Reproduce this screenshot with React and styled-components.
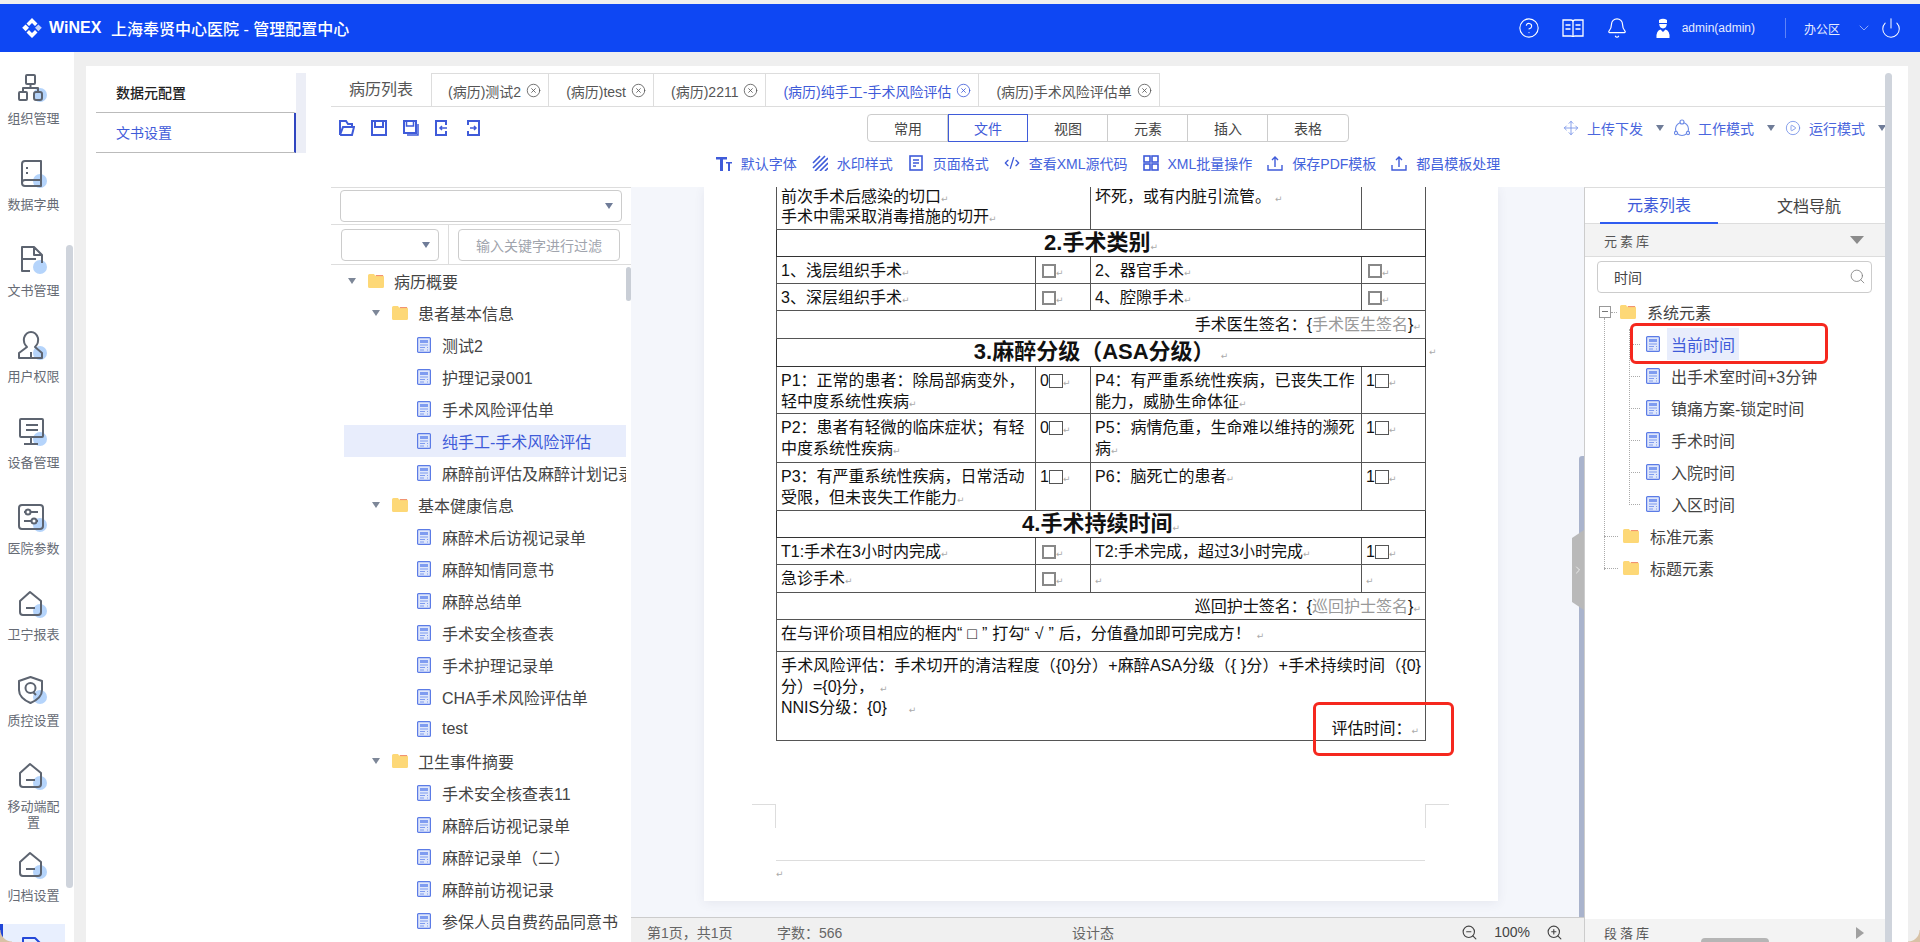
import React from 'react';
import styled, { createGlobalStyle } from 'styled-components';
import { Bell, ChevronDown, ChevronRight, CircleHelp, CirclePlay, CircleX, CodeXml, Move, Power, Search, ZoomIn, ZoomOut } from 'lucide-react';

const GlobalStyle = createGlobalStyle`
  html, body { margin: 0; padding: 0; height: 100%; overflow: hidden; }
  body { font-family: "Liberation Sans", "Noto Sans CJK SC", sans-serif; color: #333; }
  * { box-sizing: border-box; }
`;

const BLUE = '#3f5bd9';

const Shell = styled.div`
  position: relative;
  width: 1920px;
  height: 942px;
  padding-top: 4px;
  background: #efefef;
  overflow: hidden;
  display: flex;
  flex-direction: column;
`;

const Corner = styled.div`
  position: absolute;
  bottom: 0;
  width: 12px;
  height: 12px;
  ${(p) => (p.$right ? 'right: 0;' : 'left: 0;')}
  background: radial-gradient(circle at ${(p) => (p.$right ? '0 0' : '100% 0')}, transparent 11px, #d8c2a6 12px);
`;

/* header */
const Header = styled.header`
  height: 48px;
  flex: none;
  background: #0e47f3;
  color: #fff;
  display: flex;
  align-items: center;
  padding: 0 18px 0 22px;
`;

const Brand = styled.div`
  font-size: 16px;
  font-weight: 700;
  margin-left: 7px;
  width: 62px;
`;

const HeaderTitle = styled.div`
  font-size: 16px;
  font-weight: 500;
`;

const HeaderRight = styled.div`
  margin-left: auto;
  display: flex;
  align-items: center;
`;

const HeaderText = styled.span`
  font-size: 12px;
  margin-left: ${(p) => p.$left || 0}px;
  color: #e6ecff;
`;

const HeaderDivider = styled.span`
  width: 1px;
  height: 20px;
  background: #5f83f7;
  margin: 0 18px 0 30px;
`;

const Body = styled.div`
  flex: 1;
  min-height: 0;
  display: flex;
`;

/* left nav */
const Sidebar = styled.nav`
  position: relative;
  width: 74px;
  flex: none;
  background: #fff;
  padding-top: 9px;
  overflow: hidden;
`;

const SideThumb = styled.div`
  position: absolute;
  left: 66px;
  top: 193px;
  width: 7px;
  height: 643px;
  border-radius: 4px;
  background: #cfd4dc;
`;

const SideItem = styled.div`
  position: relative;
  width: 65px;
  min-height: 86px;
  padding: 12px 3px 7px;
  display: flex;
  flex-direction: column;
  align-items: center;
  background: ${(p) => (p.$active ? '#e8effe' : 'transparent')};
  ${(p) => p.$active && 'border-left: 3px solid #1f45d8;'}
`;

const SideLabel = styled.div`
  margin-top: 8px;
  width: 54px;
  font-size: 13px;
  line-height: 16px;
  text-align: center;
  color: #666b75;
  transform: translateX(1px);
`;

const Main = styled.main`
  flex: 1;
  min-width: 0;
  margin: 14px 12px 0;
  padding: 7px 16px 0 0;
  background: #fff;
  display: flex;
`;

const MenuColumn = styled.div`
  width: 245px;
  flex: none;
  padding-left: 10px;
`;

const MenuList = styled.div`
  width: 210px;
  height: 80px;
  border-right: 10px solid #eceef6;
`;

const MenuItem = styled.div`
  height: 40px;
  padding: 0 0 2px 20px;
  display: flex;
  align-items: center;
  font-size: 14px;
  font-weight: ${(p) => (p.$active ? 400 : 500)};
  color: ${(p) => (p.$active ? BLUE : '#222')};
  border-bottom: 1px solid #bbb;
  border-right: 2px solid ${(p) => (p.$active ? '#3046c0' : 'transparent')};
`;

const Workspace = styled.div`
  width: 1554px;
  flex: none;
  display: flex;
  flex-direction: column;
`;

const PageScroll = styled.div`
  width: 7px;
  flex: none;
  border-radius: 4px 4px 0 0;
  background: #cfd4dc;
`;

/* tabs */
const TabBar = styled.div`
  height: 34px;
  flex: none;
  display: flex;
  border-bottom: 1px solid #ddd;
`;

const ListTab = styled.div`
  width: 100px;
  padding: 0 0 4px 18px;
  display: flex;
  align-items: center;
  font-size: 16px;
  color: #555;
`;

const DocTab = styled.div`
  display: flex;
  align-items: center;
  gap: 5px;
  padding: 1px 7px 0 ${(p) => (p.$first ? 16 : 17)}px;
  font-size: 14px;
  color: ${(p) => (p.$active ? BLUE : '#555')};
  border: 1px solid #ddd;
  border-bottom: 0;
  border-left-width: ${(p) => (p.$first ? 1 : 0)}px;
`;

/* toolbar */
const Toolbar = styled.div`
  height: 80px;
  flex: none;
`;

const ToolRow = styled.div`
  display: grid;
  grid-template-columns: 1fr auto 1fr;
  align-items: center;
  padding-top: 7px;
  height: 35px;
  overflow: hidden;
`;

const FileIcons = styled.div`
  display: flex;
  gap: 16px;
  padding-left: 8px;
`;

const Segments = styled.div`
  display: flex;
  height: 28px;
  border: 1px solid #ccc;
  border-radius: 4px;
`;

const Segment = styled.div`
  width: 80px;
  margin: -1px 0;
  display: flex;
  align-items: center;
  justify-content: center;
  font-size: 14px;
  color: ${(p) => (p.$active ? BLUE : '#444')};
  border: 1px solid ${(p) => (p.$active ? BLUE : 'transparent')};
  border-right-color: ${(p) => (p.$active ? BLUE : p.$last ? 'transparent' : '#ccc')};
`;

const ModeActions = styled.div`
  justify-self: end;
  margin-right: -1px;
  display: flex;
  align-items: center;
`;

const ModeText = styled.span`
  margin-left: 8px;
  font-size: 14px;
  color: #4a66dd;
`;

const Caret = styled.span`
  width: 0;
  height: 0;
  margin: 0 ${(p) => p.$right ?? 10}px 0 ${(p) => p.$left ?? 13}px;
  border-left: 4px solid transparent;
  border-right: 4px solid transparent;
  border-top: 6px solid #6f7c98;
`;

const ActionRow = styled.div`
  margin-top: 8px;
  height: 26px;
  display: flex;
  justify-content: center;
  align-items: center;
  gap: 15px;
`;

const Action = styled.div`
  display: flex;
  align-items: center;
  gap: 9px;
  font-size: 14px;
  color: #4462dc;
`;

/* columns below the toolbar */
const Columns = styled.div`
  flex: 1;
  min-height: 0;
  display: flex;
`;

const TreeColumn = styled.div`
  position: relative;
  width: 300px;
  flex: none;
  border-top: 1px solid #ddd;
  display: flex;
  flex-direction: column;
`;

const FilterRow = styled.div`
  flex: none;
  display: flex;
  align-items: center;
  height: ${(p) => p.$h}px;
  padding: ${(p) => p.$pad};
  border-bottom: 1px solid #ddd;
`;

const SelectBox = styled.div`
  width: ${(p) => p.$w}px;
  height: 32px;
  padding-right: 8px;
  display: flex;
  align-items: center;
  justify-content: flex-end;
  border: 1px solid #ccc;
  border-radius: 4px;
`;

const FilterDivider = styled.span`
  align-self: stretch;
  width: 1px;
  margin: 0 9px;
  background: #ddd;
`;

const FilterInput = styled.div`
  width: 162px;
  height: 32px;
  display: flex;
  align-items: center;
  justify-content: center;
  font-size: 14px;
  color: #a0a4ad;
  border: 1px solid #ccc;
  border-radius: 4px;
`;

const Tree = styled.div`
  flex: 1;
  min-height: 0;
  overflow: hidden;
  padding: 0 0 0 13px;
`;

const TreeThumb = styled.div`
  position: absolute;
  right: 0;
  top: 79px;
  width: 5px;
  height: 34px;
  border-radius: 3px;
  background: #c9ced6;
`;

const TreeRow = styled.div`
  width: 282px;
  height: 32px;
  padding-left: ${(p) => p.$indent}px;
  display: flex;
  align-items: center;
  white-space: nowrap;
  overflow: hidden;
  font-size: 16px;
  color: ${(p) => (p.$active ? BLUE : '#444')};
  background: ${(p) => (p.$active ? '#e8edfc' : 'transparent')};
`;

const TreeCaret = styled.span`
  flex: none;
  width: 0;
  height: 0;
  margin-right: 12px;
  border-left: 4px solid transparent;
  border-right: 4px solid transparent;
  border-top: 6px solid #7d8798;
`;

const TreeGap = styled.span`
  flex: none;
  width: ${(p) => p.$w}px;
`;

/* document */
const DocColumn = styled.div`
  width: 953px;
  flex: none;
  display: flex;
  flex-direction: column;
`;

const Canvas = styled.div`
  position: relative;
  flex: 1;
  min-height: 0;
  padding-left: 73px;
  overflow: hidden;
  background: #f4f6fb;
`;

const CanvasThumb = styled.div`
  position: absolute;
  right: 0;
  top: 269px;
  bottom: 0;
  width: 5px;
  border-radius: 3px 0 0 0;
  background: #a9b3cc;
`;

const Collapse = styled.div`
  position: absolute;
  right: 0;
  top: 343px;
  width: 12px;
  height: 80px;
  display: flex;
  align-items: center;
  justify-content: center;
  color: #fff;
  background: #b9b9b9;
  clip-path: polygon(0 10%, 100% 0, 100% 100%, 0 90%);
`;

const Sheet = styled.div`
  position: relative;
  width: 794px;
  height: 714px;
  padding: 0 73px 0 72px;
  background: #fff;
  box-shadow: 0 2px 10px rgba(60, 70, 100, 0.08);
`;

const Table = styled.table`
  width: 649px;
  table-layout: fixed;
  border-collapse: collapse;
  font-size: 16px;
  line-height: 21px;
  color: #111;
`;

const Tr = styled.tr`
  height: ${(p) => p.$h}px;
`;

const Td = styled.td`
  vertical-align: top;
  padding: ${(p) => (p.$clip ? '0' : '3px')} 4px 0 ${(p) => p.$left || 4}px;
  text-align: ${(p) => p.$align || 'left'};
  border: 1px solid #555;
  ${(p) => p.$clip && 'border-top: 0; line-height: 20px;'}
`;

const TitleCell = styled.td`
  padding: 0;
  text-align: center;
  vertical-align: middle;
  font-size: 22px;
  font-weight: 700;
  line-height: 26px;
  border: 1px solid #333;
`;

const Mark = styled.span`
  font-family: "DejaVu Sans", sans-serif;
  font-size: 9px;
  font-weight: 400;
  line-height: 0;
  color: #aaa;
  margin-left: ${(p) => p.$gap || 0}px;
`;

const Box = styled.span`
  display: inline-block;
  width: 14px;
  height: 14px;
  margin-top: -2px;
  vertical-align: -2px;
  border: ${(p) => (p.$thin ? '1px solid #555' : '2px solid #888')};
`;

const Placeholder = styled.span`
  color: #999;
`;

const WideGlyph = styled.span`
  letter-spacing: 5px;
`;

const LastCell = styled.td`
  padding: 3px 4px 0;
  text-align: justify;
  vertical-align: top;
  border: 1px solid #555;
`;

const RightLine = styled.div`
  text-align: right;
  padding-right: 2px;
`;

const StrayMark = styled.span`
  position: absolute;
  left: 725px;
  top: 160px;
  font-size: 9px;
  color: #aaa;
  font-family: "DejaVu Sans", sans-serif;
`;

const CropMark = styled.span`
  position: absolute;
  top: 617px;
  width: 24px;
  height: 24px;
  ${(p) =>
    p.$right
      ? 'left: 721px; border-top: 1px solid #ddd; border-left: 1px solid #ddd;'
      : 'left: 48px; border-top: 1px solid #ddd; border-right: 1px solid #ddd;'}
`;

const SheetFooter = styled.div`
  position: absolute;
  left: 72px;
  top: 673px;
  width: 649px;
  padding-top: 7px;
  border-top: 1px solid #ddd;
  font-size: 9px;
  line-height: 12px;
  color: #aaa;
  font-family: "DejaVu Sans", sans-serif;
`;

const RedBox = styled.div`
  position: absolute;
  left: ${(p) => p.$x}px;
  top: ${(p) => p.$y}px;
  width: ${(p) => p.$w}px;
  height: ${(p) => p.$h}px;
  border: 3px solid #f5281e;
  border-radius: 6px;
`;

const StatusBar = styled.div`
  height: 25px;
  flex: none;
  padding: 4px 21px 0 16px;
  display: grid;
  grid-template-columns: 130px 295px 1fr auto;
  align-items: center;
  font-size: 14px;
  color: #666;
  background: #f0f0f0;
  border-top: 1px solid #ccc;
`;

const ZoomGroup = styled.div`
  display: flex;
  align-items: center;
  gap: 16px;
  color: #444;
`;

/* right panel */
const RightPanel = styled.aside`
  position: relative;
  flex: 1;
  min-width: 0;
  border-left: 1px solid #ccc;
  border-top: 1px solid #ddd;
  display: flex;
  flex-direction: column;
`;

const PanelTabs = styled.div`
  flex: none;
  height: 36px;
  display: flex;
  padding-left: 15px;
  border-bottom: 1px solid #ddd;
`;

const PanelTab = styled.div`
  width: ${(p) => p.$w}px;
  height: 36px;
  margin-left: ${(p) => p.$left || 0}px;
  padding-bottom: 2px;
  display: flex;
  align-items: center;
  justify-content: center;
  font-size: 16px;
  color: ${(p) => (p.$active ? BLUE : '#444')};
  ${(p) => p.$active && 'border-bottom: 2px solid #2f5cf0;'}
`;

const LibraryBar = styled.div`
  flex: none;
  height: ${(p) => p.$h}px;
  padding: ${(p) => p.$top || 0}px 21px 0 19px;
  display: flex;
  align-items: center;
  justify-content: space-between;
  font-size: 13px;
  letter-spacing: 3px;
  color: #555;
  background: #f3f3f3;
  border-bottom: ${(p) => (p.$line ? '1px solid #ddd' : '0')};
`;

const LibCaret = styled.span`
  width: 0;
  height: 0;
  ${(p) =>
    p.$side
      ? 'border-top: 6px solid transparent; border-bottom: 6px solid transparent; border-left: 8px solid #a0a0a0;'
      : 'border-left: 7px solid transparent; border-right: 7px solid transparent; border-top: 8px solid #8b8b8b;'}
`;

const SearchBox = styled.div`
  flex: none;
  height: 32px;
  margin: 4px 13px 0 12px;
  padding: 0 5px 1px 16px;
  display: flex;
  align-items: center;
  justify-content: space-between;
  font-size: 14px;
  color: #444;
  border: 1px solid #ccc;
  border-radius: 4px;
`;

const ElementTree = styled.div`
  position: relative;
  flex: 1;
  min-height: 0;
  padding-top: 3px;
`;

const Guide = styled.span`
  position: absolute;
  left: ${(p) => p.$x}px;
  top: ${(p) => p.$top}px;
  height: ${(p) => p.$h}px;
  border-left: 1px dotted #aaa;
`;

const ElementRow = styled.div`
  height: 32px;
  padding-left: ${(p) => p.$indent}px;
  display: flex;
  align-items: center;
  font-size: 16px;
  color: #444;
`;

const Stub = styled.span`
  flex: none;
  width: ${(p) => p.$w}px;
  margin-right: ${(p) => p.$gap}px;
  border-top: 1px dotted #aaa;
`;

const MinusBox = styled.span`
  flex: none;
  position: relative;
  width: 12px;
  height: 12px;
  border: 1px solid #999;
  &::after {
    content: '';
    position: absolute;
    left: 2px;
    right: 2px;
    top: 4px;
    border-top: 1px solid #777;
  }
`;

const ElementLabel = styled.span`
  height: 32px;
  margin-left: ${(p) => p.$left}px;
  padding: 0 4px;
  display: flex;
  align-items: center;
  color: ${(p) => (p.$active ? BLUE : '#444')};
  background: ${(p) => (p.$active ? '#e8edfc' : 'transparent')};
`;

const HScroll = styled.div`
  position: absolute;
  left: 116px;
  bottom: 0;
  width: 68px;
  height: 4px;
  border-radius: 4px 4px 0 0;
  background: #b5b5b5;
`;

/* drawings */
const LogoMark = () => (
  <svg width="20" height="20" viewBox="0 0 20 20" fill="#fff">
    <path d="M10 0 L15.5 5.5 L13 8 L10 5 L7 8 L4.5 5.5 Z" />
    <path d="M10 20 L15.5 14.5 L13 12 L10 15 L7 12 L4.5 14.5 Z" />
    <path d="M3.6 6.4 L7 9.8 L3.6 13.2 L0.2 9.8 Z" />
    <path d="M16.4 6.4 L19.8 9.8 L16.4 13.2 L13 9.8 Z" opacity="0.75" />
  </svg>
);

const ManualIcon = () => (
  <svg width="22" height="20" viewBox="0 0 22 20" fill="none" stroke="#fff" strokeWidth="1.3" style={{ marginLeft: 22 }}>
    <path d="M1 2 H9 Q11 2 11 4 Q11 2 13 2 H21 V18 H13 Q11 18 11 19 Q11 18 9 18 H1 Z" />
    <path d="M11 4 V18 M3.5 7 H8.5 M3.5 11 H8.5 M13.5 7 H18.5 M13.5 11 H18.5" />
  </svg>
);

const UserIcon = () => (
  <svg width="14" height="20" viewBox="0 0 14 20" fill="#fff" style={{ marginLeft: 28 }}>
    <path d="M3 2 Q7 -0.5 11 2 L11 5 L3 5 Z" />
    <path d="M3.2 6 H10.8 Q10.6 10 7 10.6 Q3.4 10 3.2 6 Z" />
    <path d="M0.5 20 Q0 12.5 4.5 11.5 L7 14 L9.5 11.5 Q14 12.5 13.5 20 Z" />
  </svg>
);

const ToolSvg = ({ children, w = 16, h = 16 }) => (
  <svg width={w} height={h} viewBox={`0 0 ${w} ${h}`} fill="none" stroke={BLUE} strokeWidth="2">
    {children}
  </svg>
);

const fileIcons = [
  <path key="a" d="M1 15 V1 H7 L9 4 H13 V7 M1 15 H13 L15 7 H4 L1 15" />,
  <g key="b"><rect x="1" y="1" width="14" height="14" /><path d="M4 1 V7 H12 V1" /></g>,
  <g key="c"><rect x="1" y="1" width="12" height="12" /><path d="M3.5 1 V6 H10.5 V1 M15 4 V15 H4" strokeWidth="1.5" /></g>,
  <g key="d"><path d="M11 5 V1 H1 V15 H11 V11" /><path d="M12 8 H5 M7 6 L5 8 L7 10" strokeWidth="1.5" /></g>,
  <g key="e"><path d="M1 5 V1 H12 V15 H1 V11" /><path d="M3 8 H9 M7 6 L9 8 L7 10" strokeWidth="1.5" /></g>,
];

const SideDrawing = ({ children, color = '#5d6470' }) => (
  <svg width="34" height="30" viewBox="0 0 34 30" fill="none" stroke={color} strokeWidth="2" strokeLinejoin="round">
    <circle cx="24" cy="22" r="7" fill="#b5d4fb" stroke="none" />
    {children}
  </svg>
);

const houseMinus = (
  <g>
    <path d="M4 12 L14 3 L25 12 V23 Q25 26 22 26 H7 Q4 26 4 23 Z" />
    <path d="M10 19 H19" />
  </g>
);

const sideItems = [
  ['组织管理', <g key="1"><rect x="10" y="2" width="9" height="9" rx="1" /><path d="M14.5 11 V15 M7 19 V15 H22 V19" /><rect x="3" y="19" width="8" height="8" rx="1" /><rect x="18" y="19" width="8" height="8" rx="2" /></g>],
  ['数据字典', <g key="2"><path d="M6 24 V5 Q6 2 9 2 H25 V27 H9 Q6 27 6 24 Q6 21 9 21 H25" /><path d="M11 8 V16" strokeDasharray="2 3" /></g>],
  ['文书管理', <g key="3"><path d="M14 26 H6 V2 H18 L26 10 V18 M18 2 V10 H26" /><path d="M6 14 H20 M6 26 V20" /></g>],
  ['用户权限', <g key="4"><path d="M11 16 Q7 12 8 7 Q10 1 15 1 Q20 1 22 7 Q23 12 19 16 L26 22 V27 H3 V22 Z" /><path d="M15 21 V26" /></g>],
  ['设备管理', <g key="5"><rect x="4" y="2" width="23" height="18" rx="1" /><path d="M10 8 H22 M10 13 H22 M15 20 V26 M8 27 H22" /></g>],
  ['医院参数', <g key="6"><rect x="3" y="2" width="24" height="24" rx="3" /><path d="M8 9 H22 M8 18 H22" /><circle cx="12" cy="9" r="2.5" fill="#fff" /><circle cx="18" cy="18" r="2.5" fill="#fff" /></g>],
  ['卫宁报表', houseMinus],
  ['质控设置', <g key="8"><path d="M14.5 2 L26 6 V15 Q26 23 14.5 28 Q3 23 3 15 V6 Z" /><circle cx="14.5" cy="13" r="5" /><path d="M17 17 L20 20" /></g>],
  ['移动端配置', houseMinus],
  ['归档设置', houseMinus],
];

const DocIcon = () => (
  <svg width="14" height="16" viewBox="0 0 14 16" style={{ flex: 'none' }}>
    <rect x="0.6" y="0.6" width="12.8" height="14.8" rx="1" fill="#dfe7fb" stroke="#5b7be6" strokeWidth="1.2" />
    <rect x="3" y="3" width="8" height="3" fill="#7f9cf0" />
    <path d="M3 8 H11 M3 10.5 H8 M3 13 H7 M10 10.5 H11 M10 13 H11" stroke="#7f9cf0" strokeWidth="1.2" />
  </svg>
);

const FolderIcon = ({ left = 0, right = 10 }) => (
  <svg width="16" height="14" viewBox="0 0 16 14" style={{ flex: 'none', marginLeft: left, marginRight: right }}>
    <path d="M0 1.5 Q0 0 1.5 0 H6 L7 1.5 H15 Q16 1.5 16 3 V12.5 Q16 14 14.5 14 H1.5 Q0 14 0 12.5 Z" fill="#fdd877" />
    <path d="M8 1.6 H15" stroke="#f08a6a" strokeWidth="1" />
  </svg>
);

const treeData = [
  [1, '病历概要'],
  [2, '患者基本信息'],
  [3, '测试2'],
  [3, '护理记录001'],
  [3, '手术风险评估单'],
  [3, '纯手工-手术风险评估', true],
  [3, '麻醉前评估及麻醉计划记录单'],
  [2, '基本健康信息'],
  [3, '麻醉术后访视记录单'],
  [3, '麻醉知情同意书'],
  [3, '麻醉总结单'],
  [3, '手术安全核查表'],
  [3, '手术护理记录单'],
  [3, 'CHA手术风险评估单'],
  [3, 'test'],
  [2, '卫生事件摘要'],
  [3, '手术安全核查表11'],
  [3, '麻醉后访视记录单'],
  [3, '麻醉记录单（二）'],
  [3, '麻醉前访视记录'],
  [3, '参保人员自费药品同意书'],
];

const tabs = [
  ['(病历)测试2'],
  ['(病历)test'],
  ['(病历)2211'],
  ['(病历)纯手工-手术风险评估', true],
  ['(病历)手术风险评估单'],
];

const actions = [
  ['默认字体', <g key="a" fill={BLUE} stroke="none"><path d="M0 2 H11 V4.5 H7 V16 H4 V4.5 H0 Z" /><path d="M10 7 H16 V8.5 H14 V16 H12 V8.5 H10 Z" /></g>],
  ['水印样式', <path key="b" d="M1 8 L8 1 M1 13 L13 1 M3 16 L16 3 M8 16 L16 8 M13 16 L16 13" strokeWidth="1.6" />],
  ['页面格式', <g key="c"><rect x="2" y="1" width="12" height="14" strokeWidth="1.6" /><path d="M5 5 H11 M5 8 H11 M5 11 H8" strokeWidth="1.4" /></g>],
  ['查看XML源代码', null],
  ['XML批量操作', <g key="e" strokeWidth="1.6"><rect x="1" y="1" width="6" height="6" /><rect x="9" y="1" width="6" height="6" /><rect x="1" y="9" width="6" height="6" /><rect x="9" y="9" width="6" height="6" /></g>],
  ['保存PDF模板', <path key="f" d="M1 10 V15 H15 V10 M8 12 V2 M5 5 L8 2 L11 5" strokeWidth="1.4" />],
  ['都昌模板处理', <path key="g" d="M1 10 V15 H15 V10 M8 12 V2 M5 5 L8 2 L11 5" strokeWidth="1.4" />],
];

const elements = ['当前时间', '出手术室时间+3分钟', '镇痛方案-锁定时间', '手术时间', '入院时间', '入区时间'];

const P = ({ gap }) => <Mark $gap={gap}>↵</Mark>;

const DocumentTable = () => (
  <Table>
    <colgroup>
      <col width="259" />
      <col width="55" />
      <col width="271" />
      <col width="64" />
    </colgroup>
    <tbody>
      <Tr $h={42}>
        <Td colSpan={2} $clip>前次手术后感染的切口<P /><br />手术中需采取消毒措施的切开<P /></Td>
        <Td $clip>坏死，或有内脏引流管。<P gap={4} /></Td>
        <Td $clip />
      </Tr>
      <Tr $h={27}><TitleCell colSpan={4}>2.手术类别<P /></TitleCell></Tr>
      <Tr $h={27}>
        <Td>1、浅层组织手术<P /></Td><Td $left={6}><Box /><P /></Td>
        <Td>2、器官手术<P /></Td><Td $left={6}><Box /><P /></Td>
      </Tr>
      <Tr $h={27}>
        <Td>3、深层组织手术<P /></Td><Td $left={6}><Box /><P /></Td>
        <Td>4、腔隙手术<P /></Td><Td $left={6}><Box /><P /></Td>
      </Tr>
      <Tr $h={28}><Td colSpan={4} $align="right">手术医生签名：{'{'}<Placeholder>手术医生签名</Placeholder>{'}'}<P /></Td></Tr>
      <Tr $h={28}><TitleCell colSpan={4}>3.麻醉分级（ASA分级）<P gap={6} /></TitleCell></Tr>
      <Tr $h={47}>
        <Td>P1：正常的患者：除局部病变外，轻中度系统性疾病<P /></Td><Td>0<Box $thin /><P /></Td>
        <Td>P4：有严重系统性疾病，已丧失工作能力，威胁生命体征<P /></Td><Td>1<Box $thin /><P /></Td>
      </Tr>
      <Tr $h={49}>
        <Td>P2：患者有轻微的临床症状；有轻中度系统性疾病<P /></Td><Td>0<Box $thin /><P /></Td>
        <Td>P5：病情危重，生命难以维持的濒死病<P /></Td><Td>1<Box $thin /><P /></Td>
      </Tr>
      <Tr $h={48}>
        <Td>P3：有严重系统性疾病，日常活动受限，但未丧失工作能力<P /></Td><Td>1<Box $thin /><P /></Td>
        <Td>P6：脑死亡的患者<P /></Td><Td>1<Box $thin /><P /></Td>
      </Tr>
      <Tr $h={27}><TitleCell colSpan={4}>4.手术持续时间<P /></TitleCell></Tr>
      <Tr $h={27}>
        <Td>T1:手术在3小时内完成<P /></Td><Td $left={6}><Box /><P /></Td>
        <Td>T2:手术完成，超过3小时完成<P /></Td><Td>1<Box $thin /><P /></Td>
      </Tr>
      <Tr $h={28}>
        <Td>急诊手术<P /></Td><Td $left={6}><Box /><P /></Td>
        <Td><P /></Td><Td><P /></Td>
      </Tr>
      <Tr $h={27}><Td colSpan={4} $align="right">巡回护士签名：{'{'}<Placeholder>巡回护士签名</Placeholder>{'}'}<P /></Td></Tr>
      <Tr $h={32}><Td colSpan={4}>在与评价项目相应的框内<WideGlyph>“□”</WideGlyph>打勾<WideGlyph>“√”</WideGlyph>后，分值叠加即可完成方！<P gap={6} /></Td></Tr>
      <Tr $h={89}>
        <LastCell colSpan={4}>
          手术风险评估：手术切开的清洁程度（{'{0}'}分）+麻醉ASA分级（{'{ }'}分）+手术持续时间（{'{0}'}分）={'{0}'}分，<P gap={6} /><br />
          NNIS分级：{'{0}'}<P gap={22} />
          <RightLine>评估时间：<P /></RightLine>
        </LastCell>
      </Tr>
    </tbody>
  </Table>
);

export default function App() {
  return (
    <>
      <GlobalStyle />
      <Shell>
        <Header>
          <LogoMark />
          <Brand>WiNEX</Brand>
          <HeaderTitle>上海奉贤中心医院 - 管理配置中心</HeaderTitle>
          <HeaderRight>
            <CircleHelp size={22} strokeWidth={1.2} />
            <ManualIcon />
            <Bell size={22} strokeWidth={1.3} style={{ marginLeft: 22 }} />
            <UserIcon />
            <HeaderText $left={12}>admin(admin)</HeaderText>
            <HeaderDivider />
            <HeaderText>办公区</HeaderText>
            <ChevronDown size={16} strokeWidth={1} color="#cdd9ff" style={{ marginLeft: 16 }} />
            <Power size={22} strokeWidth={1.1} style={{ marginLeft: 8 }} />
          </HeaderRight>
        </Header>
        <Body>
          <Sidebar>
            {sideItems.map(([label, art]) => (
              <SideItem key={label}>
                <SideDrawing>{art}</SideDrawing>
                <SideLabel>{label}</SideLabel>
              </SideItem>
            ))}
            <SideItem $active>
              <SideDrawing color="#2448d8"><path d="M6 24 V2 H18 L26 10 V26 H6" /></SideDrawing>
            </SideItem>
            <SideThumb />
          </Sidebar>
          <Main>
            <MenuColumn>
              <MenuList>
                <MenuItem>数据元配置</MenuItem>
                <MenuItem $active>文书设置</MenuItem>
              </MenuList>
            </MenuColumn>
            <Workspace>
              <TabBar>
                <ListTab>病历列表</ListTab>
                {tabs.map(([name, active], i) => (
                  <DocTab key={name} $active={active} $first={i === 0}>
                    {name}
                    <CircleX size={15} strokeWidth={1.3} />
                  </DocTab>
                ))}
              </TabBar>
              <Toolbar>
                <ToolRow>
                  <FileIcons>
                    {fileIcons.map((icon, i) => (
                      <ToolSvg key={i}>{icon}</ToolSvg>
                    ))}
                  </FileIcons>
                  <Segments>
                    {['常用', '文件', '视图', '元素', '插入', '表格'].map((s, i) => (
                      <Segment key={s} $active={s === '文件'} $last={i === 5}>{s}</Segment>
                    ))}
                  </Segments>
                  <ModeActions>
                    <Move size={16} strokeWidth={1.2} color="#6c8ae6" />
                    <ModeText>上传下发</ModeText>
                    <Caret />
                    <svg width="16" height="18" viewBox="0 0 16 18" fill="none" stroke="#6c8ae6" strokeWidth="1.1">
                      <circle cx="8" cy="10" r="6.5" />
                      <circle cx="8" cy="3" r="2" fill="#fff" />
                      <circle cx="2" cy="14" r="1.6" fill="#fff" />
                      <circle cx="14" cy="14" r="1.6" fill="#fff" />
                    </svg>
                    <ModeText>工作模式</ModeText>
                    <Caret />
                    <CirclePlay size={16} strokeWidth={1.2} color="#6c8ae6" />
                    <ModeText>运行模式</ModeText>
                    <Caret $right={0} />
                  </ModeActions>
                </ToolRow>
                <ActionRow>
                  {actions.map(([label, art]) => (
                    <Action key={label}>
                      {art ? <ToolSvg>{art}</ToolSvg> : <CodeXml size={16} strokeWidth={2} color={BLUE} />}
                      {label}
                    </Action>
                  ))}
                </ActionRow>
              </Toolbar>
              <Columns>
                <TreeColumn>
                  <FilterRow $h={37} $pad="0 9px">
                    <SelectBox $w={282}><Caret $left={1} $right={0} /></SelectBox>
                  </FilterRow>
                  <FilterRow $h={40} $pad="0 0 0 10px">
                    <SelectBox $w={98}><Caret $left={1} $right={0} /></SelectBox>
                    <FilterDivider />
                    <FilterInput>输入关键字进行过滤</FilterInput>
                  </FilterRow>
                  <Tree>
                    {treeData.map(([level, name, active]) => {
                      if (level === 3) {
                        return (
                          <TreeRow key={name} $indent={73} $active={active}>
                            <DocIcon />
                            <TreeGap $w={11} />
                            {name}
                          </TreeRow>
                        );
                      }
                      return (
                        <TreeRow key={name} $indent={level === 1 ? 4 : 28}>
                          <TreeCaret />
                          <FolderIcon />
                          {name}
                        </TreeRow>
                      );
                    })}
                  </Tree>
                  <TreeThumb />
                </TreeColumn>
                <DocColumn>
                  <Canvas>
                    <Sheet>
                      <DocumentTable />
                      <StrayMark>↵</StrayMark>
                      <CropMark />
                      <CropMark $right />
                      <SheetFooter>↵</SheetFooter>
                      <RedBox $x={609} $y={515} $w={141} $h={54} />
                    </Sheet>
                    <CanvasThumb />
                    <Collapse><ChevronRight size={12} strokeWidth={1.4} /></Collapse>
                  </Canvas>
                  <StatusBar>
                    <span>第1页，共1页</span>
                    <span>字数：566</span>
                    <span>设计态</span>
                    <ZoomGroup>
                      <ZoomOut size={17} strokeWidth={1.6} />
                      <span>100%</span>
                      <ZoomIn size={17} strokeWidth={1.6} />
                    </ZoomGroup>
                  </StatusBar>
                </DocColumn>
                <RightPanel>
                  <PanelTabs>
                    <PanelTab $active $w={118}>元素列表</PanelTab>
                    <PanelTab $w={126} $left={28}>文档导航</PanelTab>
                  </PanelTabs>
                  <LibraryBar $h={33} $line>元素库<LibCaret /></LibraryBar>
                  <SearchBox>
                    时间
                    <Search size={17} strokeWidth={1.1} color="#777" />
                  </SearchBox>
                  <ElementTree>
                    <Guide $x={19} $top={25} $h={252} />
                    <Guide $x={44} $top={36} $h={176} />
                    <ElementRow $indent={14}>
                      <MinusBox />
                      <Stub $w={6} $gap={3} />
                      <FolderIcon right={0} />
                      <ElementLabel $left={7}>系统元素</ElementLabel>
                    </ElementRow>
                    {elements.map((name, i) => (
                      <ElementRow key={name} $indent={44}>
                        <Stub $w={11} $gap={6} />
                        <DocIcon />
                        <ElementLabel $left={7} $active={i === 0}>{name}</ElementLabel>
                      </ElementRow>
                    ))}
                    {['标准元素', '标题元素'].map((name) => (
                      <ElementRow key={name} $indent={19}>
                        <Stub $w={14} $gap={5} />
                        <FolderIcon right={0} />
                        <ElementLabel $left={7}>{name}</ElementLabel>
                      </ElementRow>
                    ))}
                  </ElementTree>
                  <LibraryBar $h={23} $top={4}>段落库<LibCaret $side /></LibraryBar>
                  <RedBox $x={45} $y={135} $w={198} $h={41} />
                  <HScroll />
                </RightPanel>
              </Columns>
            </Workspace>
            <PageScroll />
          </Main>
        </Body>
        <Corner />
        <Corner $right />
      </Shell>
    </>
  );
}
